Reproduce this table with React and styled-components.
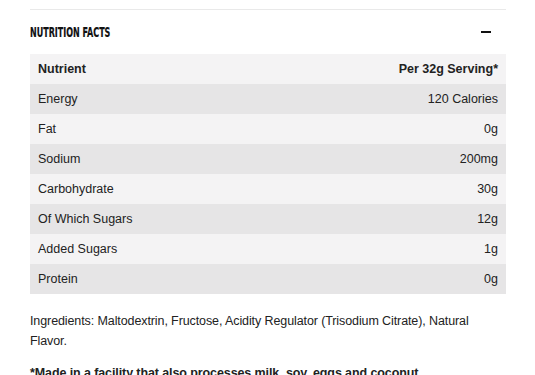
import React from 'react';
import styled, { createGlobalStyle } from 'styled-components';

const GlobalStyle = createGlobalStyle`
  body {
    margin: 0;
    background: #fff;
    font-family: "Liberation Sans", Arial, sans-serif;
    color: #222;
  }
`

const Section = styled.section`
  width: 476px;
  margin: 9px 0 0 30px;
  border-top: 1px solid #e9e9e9;
`

const Header = styled.div`
  display: flex;
  align-items: center;
  justify-content: space-between;
  height: 44px;
`

const Title = styled.h3`
  margin: 0;
  font-family: "DejaVu Sans Condensed", "Liberation Sans Narrow", sans-serif;
  font-weight: 700;
  font-size: 13.5px;
  color: #111;
  transform: scale(0.66, 1);
  transform-origin: left center;
  -webkit-text-stroke: 0.2px #111;
`

const Toggle = styled.span`
  width: 10px;
  height: 1.5px;
  background: #111;
  margin-right: 15px;
`

const Table = styled.div`
  display: flex;
  flex-direction: column;
`

const Row = styled.div`
  display: flex;
  align-items: center;
  justify-content: space-between;
  height: 30px;
  padding: 0 8px;
  font-size: 12.5px;
  font-weight: ${p => (p.$head ? 700 : 400)};
  background: ${p => (p.$dark ? '#e6e5e6' : '#f4f3f4')};
  color: #222;
`

const Text = styled.p`
  margin: ${p => p.$mt}px 0 0;
  padding-right: 4px;
  font-size: 12.5px;
  letter-spacing: -0.1px;
  line-height: 20px;
  font-weight: ${p => (p.$bold ? 700 : 400)};
  color: #222;
`

const rows = [
  ['Energy', '120 Calories'],
  ['Fat', '0g'],
  ['Sodium', '200mg'],
  ['Carbohydrate', '30g'],
  ['Of Which Sugars', '12g'],
  ['Added Sugars', '1g'],
  ['Protein', '0g'],
];

export default function App() {
  return (
    <>
      <GlobalStyle />
      <Section>
        <Header>
          <Title>NUTRITION FACTS</Title>
          <Toggle />
        </Header>
        <Table>
          <Row $head>
            <span>Nutrient</span>
            <span>Per 32g Serving*</span>
          </Row>
          {rows.map(([name, value], i) => (
            <Row key={name} $dark={i % 2 === 0}>
              <span>{name}</span>
              <span>{value}</span>
            </Row>
          ))}
        </Table>
        <Text $mt={17}>
          Ingredients: Maltodextrin, Fructose, Acidity Regulator (Trisodium Citrate), Natural Flavor.
        </Text>
        <Text $mt={12} $bold>
          *Made in a facility that also processes milk, soy, eggs and coconut.
        </Text>
      </Section>
    </>
  );
}
